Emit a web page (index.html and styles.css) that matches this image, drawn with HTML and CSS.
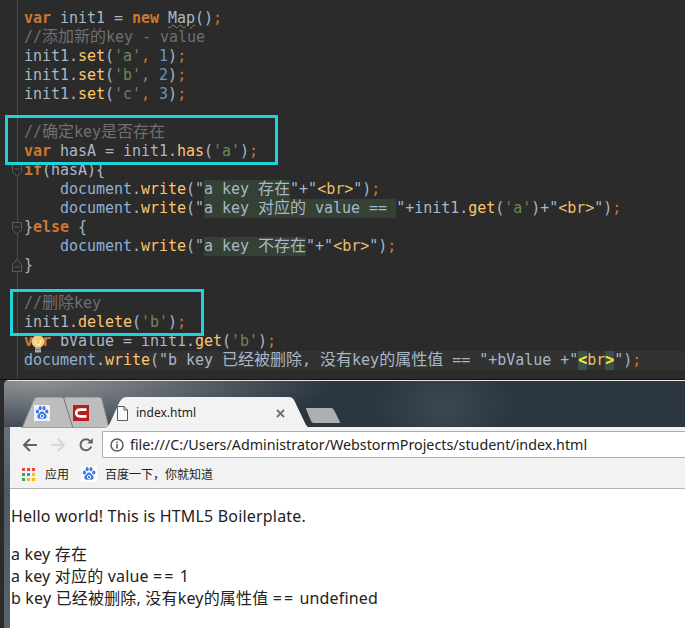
FILE: index.html
```html
<!DOCTYPE html>
<html lang="zh">
<head>
<meta charset="utf-8">
<title>index.html</title>
<link rel="stylesheet" href="styles.css">
</head>
<body>
<section class="editor">
  <div class="gutter-line"></div>
  <svg class="fold fold-if" viewBox="0 0 10 13"><path d="M.5.5h9v7L5 12.5.5 7.5z"/><path d="M2.5 5h5"/></svg>
  <svg class="fold fold-else" viewBox="0 0 10 13"><path d="M.5.5h9v7L5 12.5.5 7.5z"/><path d="M2.5 5h5"/></svg>
  <svg class="fold fold-end" viewBox="0 0 10 13"><path d="M.5 12.5h9v-7L5 .5.5 5.5z"/><path d="M2.5 8h5"/></svg>

  <div class="line"><span class="kw">var</span> init1 = <span class="kw">new</span> <span class="warn">Map</span>()<span class="kw-thin">;</span></div>
  <div class="line cm">//<span class="cjk">添加新的</span>key - value</div>
  <div class="line">init1.<span class="fn">set</span>(<span class="str">'a'</span><span class="kw-thin">,</span> <span class="num">1</span>)<span class="kw-thin">;</span></div>
  <div class="line">init1.<span class="fn">set</span>(<span class="str">'b'</span><span class="kw-thin">,</span> <span class="num">2</span>)<span class="kw-thin">;</span></div>
  <div class="line">init1.<span class="fn">set</span>(<span class="str">'c'</span><span class="kw-thin">,</span> <span class="num">3</span>)<span class="kw-thin">;</span></div>
  <div class="line"></div>
  <div class="line cm">//<span class="cjk">确定</span>key<span class="cjk">是否存在</span></div>
  <div class="line"><span class="kw">var</span> hasA = init1.<span class="fn">has</span>(<span class="str">'a'</span>)<span class="kw-thin">;</span></div>
  <div class="line"><span class="kw">if</span>(hasA){</div>
  <div class="line">    <span class="glob">document</span>.<span class="fn">write</span>("<span class="hl">a key <span class="cjk">存在</span></span>"+"<span class="tag">&lt;br&gt;</span>")<span class="kw-thin">;</span></div>
  <div class="line">    <span class="glob">document</span>.<span class="fn">write</span>("<span class="hl">a key <span class="cjk">对应的</span> value == </span>"+init1.<span class="fn">get</span>(<span class="str">'a'</span>)+"<span class="tag">&lt;br&gt;</span>")<span class="kw-thin">;</span></div>
  <div class="line">}<span class="kw">else</span> {</div>
  <div class="line">    <span class="glob">document</span>.<span class="fn">write</span>("<span class="hl">a key <span class="cjk">不存在</span></span>"+"<span class="tag">&lt;br&gt;</span>")<span class="kw-thin">;</span></div>
  <div class="line">}</div>
  <div class="line"></div>
  <div class="line cm">//<span class="cjk">删除</span>key</div>
  <div class="line">init1.<span class="fn">delete</span>(<span class="str">'b'</span>)<span class="kw-thin">;</span></div>
  <div class="line"><span class="kw">var</span> bValue = init1.<span class="fn">get</span>(<span class="str">'b'</span>)<span class="kw-thin">;</span></div>
  <div class="line current"><span class="glob">document</span>.<span class="fn">write</span>("b key <span class="cjk">已经被删除</span>, <span class="cjk">没有</span>key<span class="cjk">的属性值</span> == "+bValue +"<span class="match">&lt;</span><span class="tag">br</span><span class="match">&gt;</span>")<span class="kw-thin">;</span></div>

  <svg class="bulb" viewBox="0 0 14 18"><circle cx="7" cy="6.5" r="6.5" fill="#f6c877"/><path d="M3.5 5l2.2 5h2.6l2.2-5" fill="none" stroke="#fff6dc"/><path d="M4 12.5h6v5H4z" fill="#a8a8a8"/><path d="M4 14.5h6" stroke="#777"/></svg>
  <div class="callout callout-has"></div>
  <div class="callout callout-delete"></div>
</section>

<section class="browser">
  <header class="tabstrip">
    <svg class="tab-shapes" viewBox="0 0 681 47">
      <path d="M13 47 25 18Q26 16 28 16H52Q54 16 55 18L64 47z" fill="#bdbdbd" stroke="#7d8285"/>
      <path d="M64 47 55 18Q54 16 57 16H90Q92 16 93 18L100 47z" fill="#bdbdbd" stroke="#7d8285"/>
      <path d="M95 47Q99 47 101 42L110 22Q113 16 117 16H280Q284 16 286 21L296 42Q298 47 302 47z" fill="#f2f2f2"/>
      <path d="M298 27h24q2 0 3 2l6 12q1 1-1 1h-25q-2 0-3-2l-5-12q-1-1 1-1z" fill="#adafb1"/>
    </svg>
    <div class="tab tab-baidu">
      <svg class="favicon" viewBox="0 0 16 16"><rect width="16" height="16" fill="#eef3fb"/><g fill="#3b78e0"><ellipse cx="3.4" cy="6.6" rx="1.6" ry="2"/><ellipse cx="6.2" cy="3.2" rx="1.5" ry="2.1"/><ellipse cx="10" cy="3.2" rx="1.5" ry="2.1"/><ellipse cx="12.8" cy="6.6" rx="1.6" ry="2"/><path d="M8 6.6c2 0 2.4 2 3.8 3 1.6 1.2 1 4.4-1.6 4.2-1 0-1.5-.4-2.2-.4s-1.2.4-2.2.4c-2.6.2-3.2-3-1.6-4.2 1.4-1 1.8-3 3.8-3z"/></g><circle cx="8" cy="11" r="1.7" fill="none" stroke="#fff"/></svg>
    </div>
    <div class="tab tab-c">
      <svg class="favicon" viewBox="0 0 16 16"><rect width="16" height="16" fill="#b3201f"/><path d="M13.5 4.6H7.2Q3.2 4.6 3.2 8t4 3.4h6.3" fill="none" stroke="#fff" stroke-width="2.6"/></svg>
    </div>
    <div class="tab tab-active">
      <svg class="doc-icon" viewBox="0 0 11 15"><path d="M.5.5h6.5l3.5 3.5v10.5H.5z M7 .5V4h3.5" fill="#fafafa" stroke="#5a5a5a"/></svg>
      <span class="tab-title">index.html</span>
      <svg class="tab-close" viewBox="0 0 9 9"><path d="M1 1l7 7M8 1 1 8" stroke="#6f6f6f" stroke-width="1.8"/></svg>
    </div>
  </header>
  <div class="chrome">
    <div class="toolbar">
      <svg class="nav" viewBox="0 0 16 16"><path d="M15 8H2M8 2 2 8l6 6" fill="none" stroke="#5f6368" stroke-width="2"/></svg>
      <svg class="nav" viewBox="0 0 16 16"><path d="M1 8h13M8 2l6 6-6 6" fill="none" stroke="#d6d6d6" stroke-width="2"/></svg>
      <svg class="nav" viewBox="0 0 16 16"><path d="M13.2 9.5A5.5 5.5 0 1 1 12 4" fill="none" stroke="#5f6368" stroke-width="2"/><path d="M9.2 6.6h5.6V1z" fill="#5f6368"/></svg>
      <div class="omnibox">
        <svg class="info" viewBox="0 0 14 14"><circle cx="7" cy="7" r="6" fill="none" stroke="#5a5a5a" stroke-width="1.5"/><path d="M7 6v4.4M7 3.4v1.5" stroke="#5a5a5a" stroke-width="1.6"/></svg>
        <span class="url">file:///C:/Users/Administrator/WebstormProjects/student/index.html</span>
      </div>
    </div>
    <nav class="bookmarks">
      <div class="bookmark">
        <svg class="apps" viewBox="0 0 13 13"><g><rect width="3" height="3" fill="#e8453c"/><rect x="5" width="3" height="3" fill="#e8453c"/><rect x="10" width="3" height="3" fill="#e8453c"/><rect y="5" width="3" height="3" fill="#34a853"/><rect x="5" y="5" width="3" height="3" fill="#4285f4"/><rect x="10" y="5" width="3" height="3" fill="#fbbc05"/><rect y="10" width="3" height="3" fill="#34a853"/><rect x="5" y="10" width="3" height="3" fill="#fbbc05"/><rect x="10" y="10" width="3" height="3" fill="#fbbc05"/></g></svg>
        <span>应用</span>
      </div>
      <div class="bookmark">
        <svg class="favicon" viewBox="0 0 16 16"><rect width="16" height="16" fill="#fff"/><g fill="#3b78e0"><ellipse cx="3.4" cy="6.6" rx="1.6" ry="2"/><ellipse cx="6.2" cy="3.2" rx="1.5" ry="2.1"/><ellipse cx="10" cy="3.2" rx="1.5" ry="2.1"/><ellipse cx="12.8" cy="6.6" rx="1.6" ry="2"/><path d="M8 6.6c2 0 2.4 2 3.8 3 1.6 1.2 1 4.4-1.6 4.2-1 0-1.5-.4-2.2-.4s-1.2.4-2.2.4c-2.6.2-3.2-3-1.6-4.2 1.4-1 1.8-3 3.8-3z"/></g><circle cx="8" cy="11" r="1.7" fill="none" stroke="#fff"/></svg>
        <span>百度一下，你就知道</span>
      </div>
    </nav>
  </div>
  <main class="page">
    <p class="intro">Hello world! This is HTML5 Boilerplate.</p>
    <p class="output">a key 存在<br>a key 对应的 value <span class="eq">==</span> 1<br>b key 已经被删除, 没有key的属性值 <span class="eq">==</span> undefined</p>
  </main>
</section>
</body>
</html>
```
FILE: styles.css
```css
* { box-sizing: border-box; }

html, body {
  margin: 0;
  height: 628px;
  overflow: hidden;
  background: #2b2b2b;
}

.editor {
  position: relative;
  height: 380px;
  padding: 9px 0 0 24px;
  background: #2b2b2b;
  border-bottom: 1px solid #141414;
  font: 15px/19px "DejaVu Sans Mono", monospace;
  letter-spacing: -.03px;
  color: #a9b7c6;
}

.line {
  height: 19px;
  white-space: pre;
}

.current { background: #323232; }

.kw { color: #cc7832; font-weight: 700; }
.kw-thin { color: #cc7832; }
.cm { color: #707070; }
.fn { color: #ffc66d; }
.str { color: #6a8759; }
.num { color: #6897bb; }
.glob { color: #8fb0d4; }
.tag { color: #e8bf6a; }

.cjk {
  font: 16px/0 "Noto Sans CJK SC", sans-serif;
  letter-spacing: 0;
}

.hl {
  display: inline-block;
  height: 19px;
  vertical-align: top;
  background: #344134;
}

.match {
  display: inline-block;
  height: 19px;
  vertical-align: top;
  background: #3b514d;
  color: #ffef28;
  font-weight: 700;
}

.warn {
  text-decoration: underline wavy #7f8a5e 1px;
  text-underline-offset: 1px;
}

.gutter-line {
  position: absolute;
  left: 17px;
  top: 0;
  bottom: 0;
  width: 1px;
  background: #4a4a4a;
}

.fold {
  position: absolute;
  left: 12px;
  width: 10px;
  height: 13px;
}

.fold path {
  fill: #2b2b2b;
  stroke: #5c5c5c;
}

.fold-if { top: 164px; }
.fold-else { top: 222px; }
.fold-end { top: 259px; }

.bulb {
  position: absolute;
  left: 31px;
  top: 335px;
  width: 14px;
  height: 18px;
}

.callout {
  position: absolute;
  border: 3px solid #1fd3d8;
}

.callout-has {
  left: 5px;
  top: 115px;
  width: 273px;
  height: 50px;
}

.callout-delete {
  left: 10px;
  top: 289px;
  width: 194px;
  height: 47px;
}

.browser {
  height: 248px;
  margin-left: 4px;
  padding-left: 6px;
  display: flex;
  flex-direction: column;
  border-top: 1px solid #e4e6e8;
  border-top-left-radius: 5px;
  background: linear-gradient(#7d8286, #4f5963 45%, #59636c);
  overflow: hidden;
  font-family: "Noto Sans", "Noto Sans CJK SC", sans-serif;
  color: #222;
}

.tabstrip {
  position: relative;
  height: 46px;
  margin-left: -6px;
  padding-left: 6px;
  display: flex;
  align-items: flex-start;
  background:
    radial-gradient(ellipse 70px 50px at 440px 25px, rgba(98, 108, 118, .32), transparent),
    radial-gradient(ellipse 300px 60px at 30px 0, #8f9397, transparent),
    #2b3641;
}

.tab-shapes {
  position: absolute;
  left: 5px;
  top: 0;
  width: 681px;
  height: 47px;
}

.tab {
  position: relative;
  display: flex;
  align-items: center;
  height: 16px;
  margin-top: 24px;
}

.favicon {
  width: 16px;
  height: 16px;
  flex: none;
}

.tab-baidu { margin-left: 24px; width: 39px; }
.tab-c { width: 44px; }

.tab-active {
  flex: 1;
  gap: 8px;
}

.doc-icon { width: 11px; height: 15px; }

.tab-title {
  font-size: 12px;
  line-height: 16px;
}

.tab-close {
  width: 9px;
  height: 9px;
  margin-left: 72px;
}

.chrome {
  background: #f2f2f2;
  border-bottom: 1px solid #b4b4b4;
}

.toolbar {
  height: 33px;
  display: flex;
  align-items: center;
  padding: 2px 0 0 12px;
}

.nav {
  width: 16px;
  height: 16px;
  flex: none;
  margin-right: 12px;
}

.omnibox {
  flex: 1;
  height: 27px;
  margin-left: -4px;
  display: flex;
  align-items: center;
  gap: 6px;
  padding-left: 7px;
  background: #fff;
  border: 1px solid #acacac;
  border-right: 0;
  border-radius: 2px 0 0 2px;
}

.info { width: 14px; height: 14px; flex: none; }

.url {
  font-size: 14.3px;
  white-space: nowrap;
}

.bookmarks {
  height: 28px;
  display: flex;
  align-items: center;
  gap: 12px;
  padding-left: 12px;
  font-size: 12px;
}

.bookmark {
  display: flex;
  align-items: center;
  gap: 8px;
}

.apps { width: 13px; height: 13px; margin-right: 2px; }

.page {
  flex: 1;
  background: #fff;
  padding: 16px 0 0 1px;
  font-size: 16px;
  line-height: 22px;
  letter-spacing: .18px;
}

.page p { margin: 0 0 16px; }

.eq { letter-spacing: 2px; }
```
